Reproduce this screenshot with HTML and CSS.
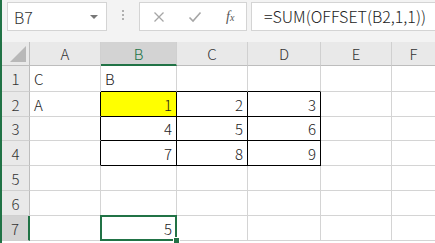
FILE: index.html
```html
<!DOCTYPE html>
<html lang="ja">
<head>
    <meta charset="UTF-8">
    <title>Sheet1</title>
    <link rel="stylesheet" href="styles.css">
</head>
<body>
    <div class="app">
        <div class="toolbar">
            <div class="name-box">
                <span>B7</span>
                <span class="caret"></span>
            </div>
            <div class="grip"><i></i><i></i><i></i></div>
            <div class="fx-buttons">
                <svg class="btn-icon" width="12" height="12" viewBox="0 0 12 12"><path d="M1.5 1.5 L10.5 10.5 M10.5 1.5 L1.5 10.5" stroke="#a6a6a6" stroke-width="1.3" fill="none"/></svg>
                <svg class="btn-icon" width="14" height="12" viewBox="0 0 14 12"><path d="M1.5 6.5 L5 10 L12.5 1.5" stroke="#a6a6a6" stroke-width="1.6" fill="none"/></svg>
                <span class="fx">f<sub>x</sub></span>
            </div>
            <div class="formula">=SUM(OFFSET(B2,1,1))</div>
        </div>

        <div class="sheet">
            <div class="hd corner"><span class="tri"></span></div>
            <div class="hd">A</div>
            <div class="hd sel">B</div>
            <div class="hd">C</div>
            <div class="hd">D</div>
            <div class="hd">E</div>
            <div class="hd last">F</div>

            <div class="rh">1</div>
            <div class="c">C</div>
            <div class="c box-t">B</div>
            <div class="c box-t"></div>
            <div class="c box-t"></div>
            <div class="c"></div>
            <div class="c last"></div>

            <div class="rh">2</div>
            <div class="c box-l">A</div>
            <div class="c n box yellow">1</div>
            <div class="c n box">2</div>
            <div class="c n box">3</div>
            <div class="c"></div>
            <div class="c last"></div>

            <div class="rh">3</div>
            <div class="c box-l"></div>
            <div class="c n box">4</div>
            <div class="c n box">5</div>
            <div class="c n box">6</div>
            <div class="c"></div>
            <div class="c last"></div>

            <div class="rh">4</div>
            <div class="c box-l"></div>
            <div class="c n box">7</div>
            <div class="c n box">8</div>
            <div class="c n box">9</div>
            <div class="c"></div>
            <div class="c last"></div>

            <div class="rh">5</div>
            <div class="c"></div>
            <div class="c"></div>
            <div class="c"></div>
            <div class="c"></div>
            <div class="c"></div>
            <div class="c last"></div>

            <div class="rh">6</div>
            <div class="c"></div>
            <div class="c"></div>
            <div class="c"></div>
            <div class="c"></div>
            <div class="c"></div>
            <div class="c last"></div>

            <div class="rh sel">7</div>
            <div class="c"></div>
            <div class="c n active">5</div>
            <div class="c"></div>
            <div class="c"></div>
            <div class="c"></div>
            <div class="c last"></div>
        </div>
    </div>
</body>
</html>
```

FILE: styles.css
```css
html, body {
    margin: 0;
    padding: 0;
    background-color: #fff;
}

body {
    font-family: "Noto Sans CJK JP", "Noto Sans", sans-serif;
    font-weight: 300;
    color: #222;
    width: 435px;
    height: 243px;
    overflow: hidden;
}

.app {
    border-left: 2px solid #217346;
    height: 243px;
}

/* ツールバー（名前ボックス・数式バー） */
.toolbar {
    display: flex;
    align-items: flex-start;
    height: 42px;
    padding-top: 2px;
    box-sizing: border-box;
    background-color: #f3f3f3;
}

.name-box {
    display: flex;
    align-items: center;
    justify-content: space-between;
    width: 100px;
    height: 29px;
    margin-left: 5px;
    padding: 0 6px 0 6px;
    box-sizing: border-box;
    background-color: #fff;
    border: 1px solid #d4d4d4;
    font-size: 16px;
    color: #333;
}

.caret {
    width: 0;
    height: 0;
    border-left: 4px solid transparent;
    border-right: 4px solid transparent;
    border-top: 4px solid #777;
    margin-right: 2px;
}

.grip {
    display: flex;
    flex-direction: column;
    gap: 2px;
    width: 32px;
    align-items: center;
    padding-top: 8px;
}

.grip i {
    display: block;
    width: 2px;
    height: 2px;
    background-color: #b0b0b0;
}

.fx-buttons {
    display: flex;
    align-items: center;
    width: 108px;
    height: 29px;
    box-sizing: border-box;
    padding-left: 13px;
    background-color: #fff;
    border: 1px solid #d4d4d4;
}

.btn-icon {
    margin-right: 23px;
}

.btn-icon + .btn-icon {
    margin-right: 24px;
}

.fx {
    font-family: "Liberation Serif", serif;
    font-style: italic;
    font-weight: 400;
    font-size: 14px;
    color: #555;
}

.fx sub {
    font-size: 10px;
    vertical-align: 0;
}

.formula {
    flex: 1;
    height: 29px;
    margin-left: 4px;
    padding-left: 12px;
    box-sizing: border-box;
    background-color: #fff;
    border: 1px solid #d4d4d4;
    border-right: none;
    font-size: 16px;
    line-height: 27px;
    color: #222;
    white-space: nowrap;
    overflow: hidden;
}

/* シート */
.sheet {
    display: grid;
    grid-template-columns: 28px 71px 76px 71px 73px 71px 1fr;
    grid-template-rows: 24px 26px 25px 24px 25px 25px 25px 25px;
    font-size: 15px;
}

.hd {
    display: flex;
    align-items: center;
    justify-content: center;
    background-color: #e9e9e9;
    border-right: 1px solid #d0d0d0;
    border-bottom: 1px solid #bdbdbd;
    color: #333;
}

.hd.sel {
    background-color: #d3d3d3;
    border-bottom: 2px solid #217346;
    color: #217346;
}

.corner {
    position: relative;
    border-right: 1px solid #bdbdbd;
}

.tri {
    position: absolute;
    right: 3px;
    bottom: 3px;
    width: 0;
    height: 0;
    border-left: 16px solid transparent;
    border-bottom: 16px solid #b8b8b8;
}

.rh {
    display: flex;
    align-items: center;
    justify-content: center;
    background-color: #e9e9e9;
    border-right: 1px solid #bdbdbd;
    border-bottom: 1px solid #d0d0d0;
    color: #333;
}

.rh.sel {
    background-color: #d3d3d3;
    border-right: 2px solid #217346;
}

.c {
    position: relative;
    display: flex;
    align-items: center;
    padding: 0 4px;
    border-right: 1px solid #d4d4d4;
    border-bottom: 1px solid #d4d4d4;
    white-space: nowrap;
}

.c.last,
.hd.last {
    border-right: none;
}

.c.n {
    justify-content: flex-end;
}

.c.box {
    border-right-color: #000;
    border-bottom-color: #000;
}

.c.box-t {
    border-bottom-color: #000;
}

.c.box-l {
    border-right-color: #000;
}

.c.yellow {
    background-color: #ffff00;
}

/* アクティブセル */
.c.active::after {
    content: "";
    position: absolute;
    left: -1px;
    top: -1px;
    right: -1px;
    bottom: -1px;
    border: 2px solid #217346;
}

.c.active::before {
    content: "";
    position: absolute;
    right: -4px;
    bottom: -4px;
    width: 5px;
    height: 5px;
    background-color: #217346;
    border: 1px solid #fff;
    z-index: 1;
}
```
